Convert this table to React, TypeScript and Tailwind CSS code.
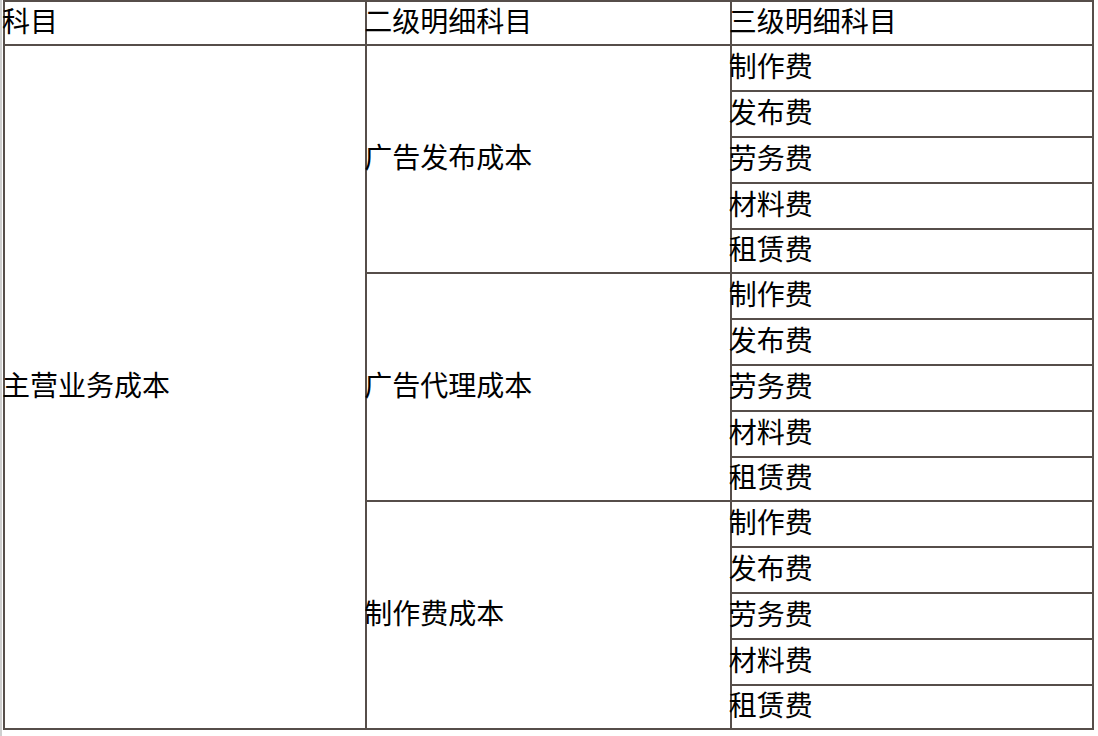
const groups = [
  { name: "广告发布成本" },
  { name: "广告代理成本" },
  { name: "制作费成本" },
];

const items = ["制作费", "发布费", "劳务费", "材料费", "租赁费"];
const rowHeights = ["h-[46px]", "h-[46px]", "h-[46px]", "h-[46px]", "h-[44px]"];

const cell =
  "border-2 border-[#564e4a] p-0 pb-[6px] indent-[-3px] align-middle text-left font-normal leading-none whitespace-nowrap";

export default function App() {
  return (
    <div
      className="flex h-[736px] w-[1098px] bg-white text-[28px] text-black"
      style={{ fontFamily: '"Noto Sans CJK SC", "Noto Sans", sans-serif' }}
    >
      <div className="h-full w-[2px] bg-[#cfcfcf]" />
      <div className="w-[1px]" />
      <table className="h-[729px] w-[1091px] table-fixed border-collapse">
        <colgroup>
          <col className="w-[362px]" />
          <col className="w-[364px]" />
          <col className="w-[362px]" />
        </colgroup>
        <tbody>
          <tr className="h-[44px]">
            <td className={cell}>科目</td>
            <td className={cell}>二级明细科目</td>
            <td className={cell}>三级明细科目</td>
          </tr>
          {groups.map((g, gi) =>
            items.map((item, ii) => (
              <tr key={`${gi}-${ii}`} className={rowHeights[ii]}>
                {gi === 0 && ii === 0 && (
                  <td rowSpan={15} className={cell}>
                    主营业务成本
                  </td>
                )}
                {ii === 0 && (
                  <td rowSpan={5} className={cell}>
                    {g.name}
                  </td>
                )}
                <td className={cell}>{item}</td>
              </tr>
            ))
          )}
        </tbody>
      </table>
    </div>
  );
}
